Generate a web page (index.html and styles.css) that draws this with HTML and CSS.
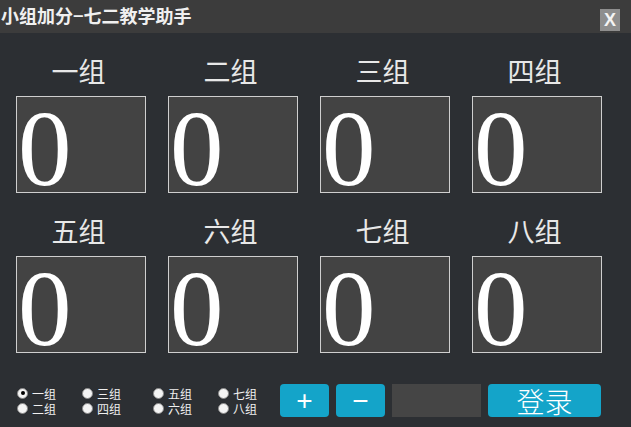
FILE: index.html
```html
<!DOCTYPE html>
<html lang="zh">
<head>
<meta charset="utf-8">
<link rel="stylesheet" href="styles.css">
</head>
<body>
<div class="window">
  <div class="titlebar">
    <span class="title">小组加分−七二教学助手</span>
    <span class="close">X</span>
  </div>
  <div class="grid">
    <div class="cell"><div class="label">一组</div><div class="score">0</div></div>
    <div class="cell"><div class="label">二组</div><div class="score">0</div></div>
    <div class="cell"><div class="label">三组</div><div class="score">0</div></div>
    <div class="cell"><div class="label">四组</div><div class="score">0</div></div>
    <div class="cell"><div class="label">五组</div><div class="score">0</div></div>
    <div class="cell"><div class="label">六组</div><div class="score">0</div></div>
    <div class="cell"><div class="label">七组</div><div class="score">0</div></div>
    <div class="cell"><div class="label">八组</div><div class="score">0</div></div>
  </div>
  <div class="controls">
    <div class="radios">
      <label class="radio"><span class="dot checked"></span>一组</label>
      <label class="radio"><span class="dot"></span>三组</label>
      <label class="radio"><span class="dot"></span>五组</label>
      <label class="radio"><span class="dot"></span>七组</label>
      <label class="radio"><span class="dot"></span>二组</label>
      <label class="radio"><span class="dot"></span>四组</label>
      <label class="radio"><span class="dot"></span>六组</label>
      <label class="radio"><span class="dot"></span>八组</label>
    </div>
    <div class="btn small">+</div>
    <div class="btn small">−</div>
    <div class="field"></div>
    <div class="btn login">登录</div>
  </div>
</div>
</body>
</html>
```
FILE: styles.css
```css
html, body {
  margin: 0;
  padding: 0;
  background: #2c2f33;
}
.window {
  width: 631px;
  height: 427px;
  background: #2c2f33;
  font-family: "Noto Sans CJK SC", "Liberation Sans", sans-serif;
  overflow: hidden;
}
.titlebar {
  height: 33px;
  background: #3c3c3c;
  display: flex;
  justify-content: space-between;
  padding: 0 11px 0 1px;
  box-sizing: border-box;
}
.title {
  color: #f0f0f0;
  font-size: 18px;
  font-weight: bold;
  line-height: 33px;
  margin-top: -1px;
}
.close {
  width: 20px;
  height: 22px;
  margin-top: 9px;
  background: #8e8e8e;
  color: #f4f4f4;
  font-family: "Liberation Sans", sans-serif;
  font-weight: bold;
  font-size: 18px;
  display: flex;
  align-items: center;
  justify-content: center;
}
.grid {
  display: grid;
  grid-template-columns: repeat(4, 130px);
  column-gap: 22px;
  padding-left: 16px;
}
.cell {
  display: flex;
  flex-direction: column;
}
.label {
  height: 63px;
  display: flex;
  align-items: flex-end;
  justify-content: center;
  color: #e8e8e8;
  font-size: 27px;
  line-height: 1;
  padding-bottom: 12px;
  padding-right: 5px;
  box-sizing: border-box;
}
.score {
  height: 97px;
  box-sizing: border-box;
  border: 1px solid #cfcfcf;
  background: #434343;
  color: #ffffff;
  font-family: "Liberation Serif", serif;
  font-size: 107px;
  line-height: 85px;
  padding-top: 10px;
  padding-left: 1px;
}
.controls {
  display: flex;
  align-items: center;
  margin-top: 31px;
  padding-left: 17px;
  height: 33px;
}
.radios {
  display: grid;
  grid-template-columns: 65px 71px 65px 62px;
  width: 263px;
}
.radio {
  display: flex;
  align-items: center;
  color: #f0f0f0;
  font-size: 12px;
  line-height: 15px;
}
.dot {
  width: 11px;
  height: 11px;
  border-radius: 50%;
  background: #f4f4f4;
  box-sizing: border-box;
  border: 1px solid #8a8a8a;
  margin-right: 4px;
  position: relative;
}
.dot.checked::after {
  content: "";
  position: absolute;
  left: 2.5px;
  top: 2.5px;
  width: 4px;
  height: 4px;
  border-radius: 50%;
  background: #000;
}
.btn {
  height: 33px;
  background: #14a4c9;
  color: #ffffff;
  border-radius: 4px;
  display: flex;
  align-items: center;
  justify-content: center;
}
.small {
  width: 49px;
  font-family: "Liberation Sans", sans-serif;
  font-size: 28px;
  margin-right: 7px;
}
.field {
  width: 89px;
  height: 33px;
  background: #454545;
  margin-right: 7px;
}
.login {
  width: 113px;
  font-size: 28px;
  font-weight: 300;
}
```
